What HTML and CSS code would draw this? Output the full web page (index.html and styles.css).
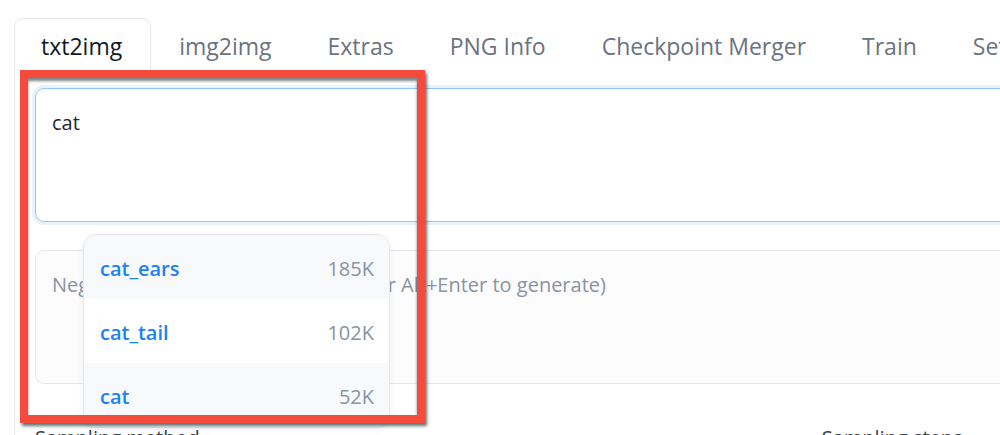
FILE: index.html
```html
<!DOCTYPE html>
<html lang="en">
<head>
  <meta charset="UTF-8">
  <title>txt2img</title>
  <link rel="stylesheet" href="styles.css">
</head>
<body>
  <div class="app">
    <div class="tabs">
      <div class="tab active">txt2img</div>
      <div class="tab">img2img</div>
      <div class="tab">Extras</div>
      <div class="tab">PNG Info</div>
      <div class="tab">Checkpoint Merger</div>
      <div class="tab">Train</div>
      <div class="tab">Settings</div>
    </div>

    <div class="panel">
      <div class="prompt">cat</div>
      <div class="negative">Negative prompt (press Ctrl+Enter or Alt+Enter to generate)</div>

      <div class="labels">
        <span class="label-left">Sampling method</span>
        <span class="label-right">Sampling steps</span>
      </div>

      <ul class="suggest">
        <li class="item"><span class="tag">cat_ears</span><span class="count">185K</span></li>
        <li class="item"><span class="tag">cat_tail</span><span class="count">102K</span></li>
        <li class="item"><span class="tag">cat</span><span class="count">52K</span></li>
      </ul>
    </div>

    <div class="highlight"></div>
  </div>
</body>
</html>
```

FILE: styles.css
```css
body {
  margin: 0;
  background-color: #ffffff;
  font-family: 'Open Sans', 'Lato', sans-serif;
  overflow: hidden;
}

.app {
  position: relative;
  width: 1300px;
  padding: 18px 0 0 14px;
}

.tabs {
  display: flex;
  border-bottom: 1px solid #e5e7eb;
  height: 53px;
}

.tab {
  padding: 0 27px;
  display: flex;
  align-items: center;
  font-size: 23px;
  color: #6b7280;
  border: 1px solid transparent;
  border-bottom: none;
  border-radius: 9px 9px 0 0;
  margin-bottom: -1px;
  background-color: #ffffff;
}

.tab.active {
  color: #111827;
  border-color: #e5e7eb;
  padding: 0 28px 0 26px;
}

.panel {
  position: relative;
  border-left: 1px solid #e5e7eb;
  padding: 16px 0 40px 20px;
}

.prompt {
  height: 112px;
  border: 1px solid #93c5fd;
  border-radius: 9px;
  box-shadow: 0 0 0 3px rgba(191, 219, 254, 0.35);
  padding: 20px 16px 0 16px;
  font-size: 20px;
  color: #1f2937;
}

.negative {
  margin-top: 28px;
  height: 112px;
  border: 1px solid #e5e7eb;
  border-radius: 9px;
  background-color: #fcfcfd;
  padding: 20px 16px 0 16px;
  font-size: 20px;
  color: #8a93a1;
}

.labels {
  display: flex;
  margin-top: 40px;
  font-size: 20px;
  color: #374151;
}

.label-right {
  margin-left: 622px;
}

.suggest {
  position: absolute;
  left: 68px;
  top: 162px;
  width: 305px;
  margin: 0;
  padding: 0;
  list-style: none;
  background-color: #ffffff;
  border: 1px solid #e5e7eb;
  border-radius: 13px;
  overflow: hidden;
  box-shadow: 0 2px 6px rgba(0, 0, 0, 0.06);
}

.item {
  box-sizing: border-box;
  display: flex;
  justify-content: space-between;
  align-items: center;
  height: 64px;
  padding: 2px 15px 0 16px;
  font-size: 20px;
}

.item:nth-child(odd) {
  background-color: #f8f9fb;
}

.tag {
  color: #1a82f5;
  font-weight: 600;
}

.count {
  color: #8a93a1;
}

.highlight {
  position: absolute;
  left: 20px;
  top: 70px;
  width: 389px;
  height: 337px;
  border: 8px solid #f44b3c;
  box-shadow: 2px 3px 3px rgba(40, 70, 70, 0.75), inset 0 3px 3px rgba(30, 50, 50, 0.6);
}
```
